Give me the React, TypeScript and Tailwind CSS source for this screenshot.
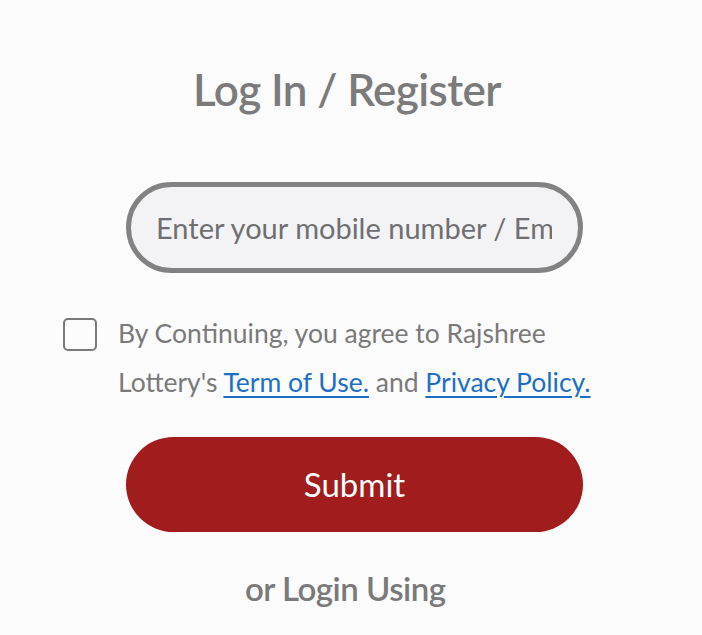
import React from "react";

export default function App() {
  return (
    <div
      className="w-[702px] h-[635px] bg-[#fcfcfc] overflow-hidden relative"
      style={{ fontFamily: "Lato, 'Open Sans', sans-serif" }}
    >
      <div className="flex flex-col">
        <h1 className="mt-[60px] ml-[193px] text-[44px] leading-[58px] font-semibold text-[#7b7b7b] tracking-[-0.6px]">
          Log In / Register
        </h1>
        <div className="mt-[64px] ml-[126px] w-[457px] h-[91px] rounded-full border-[5px] border-[#828282] bg-[#f3f3f5] flex items-center pl-[25px] pr-[26px] overflow-hidden">
          <input
            className="w-full bg-transparent outline-none text-[29px] text-[#6b6b6b] placeholder:text-[#6f6f73]"
            placeholder="Enter your mobile number / Email"
          />
        </div>
        <div className="mt-[45px] ml-[63px] flex items-start">
          <div className="w-[34px] h-[33px] rounded-[5px] border-2 border-[#7a7a7a] shrink-0" />
          <p className="ml-[21px] text-[26.5px] leading-[49px] text-[#7a7a7a] -mt-[9px] w-[540px]">
            By Continuing, you agree to Rajshree
            <br />
            Lottery's{" "}
            <a className="text-[#1c6fc7] underline underline-offset-[4px]">Term of Use.</a>{" "}
            and{" "}
            <a className="text-[#1c6fc7] underline underline-offset-[4px]">Privacy Policy.</a>
          </p>
        </div>
        <button className="mt-[30px] ml-[126px] w-[457px] h-[95px] rounded-full bg-[#a11c1d] text-white text-[33px] flex items-center justify-center">
          Submit
        </button>
        <div className="mt-[34px] ml-[245px] text-[33px] leading-[44px] font-semibold text-[#7a7a7a] tracking-[-0.5px]">
          or Login Using
        </div>
      </div>
    </div>
  );
}
